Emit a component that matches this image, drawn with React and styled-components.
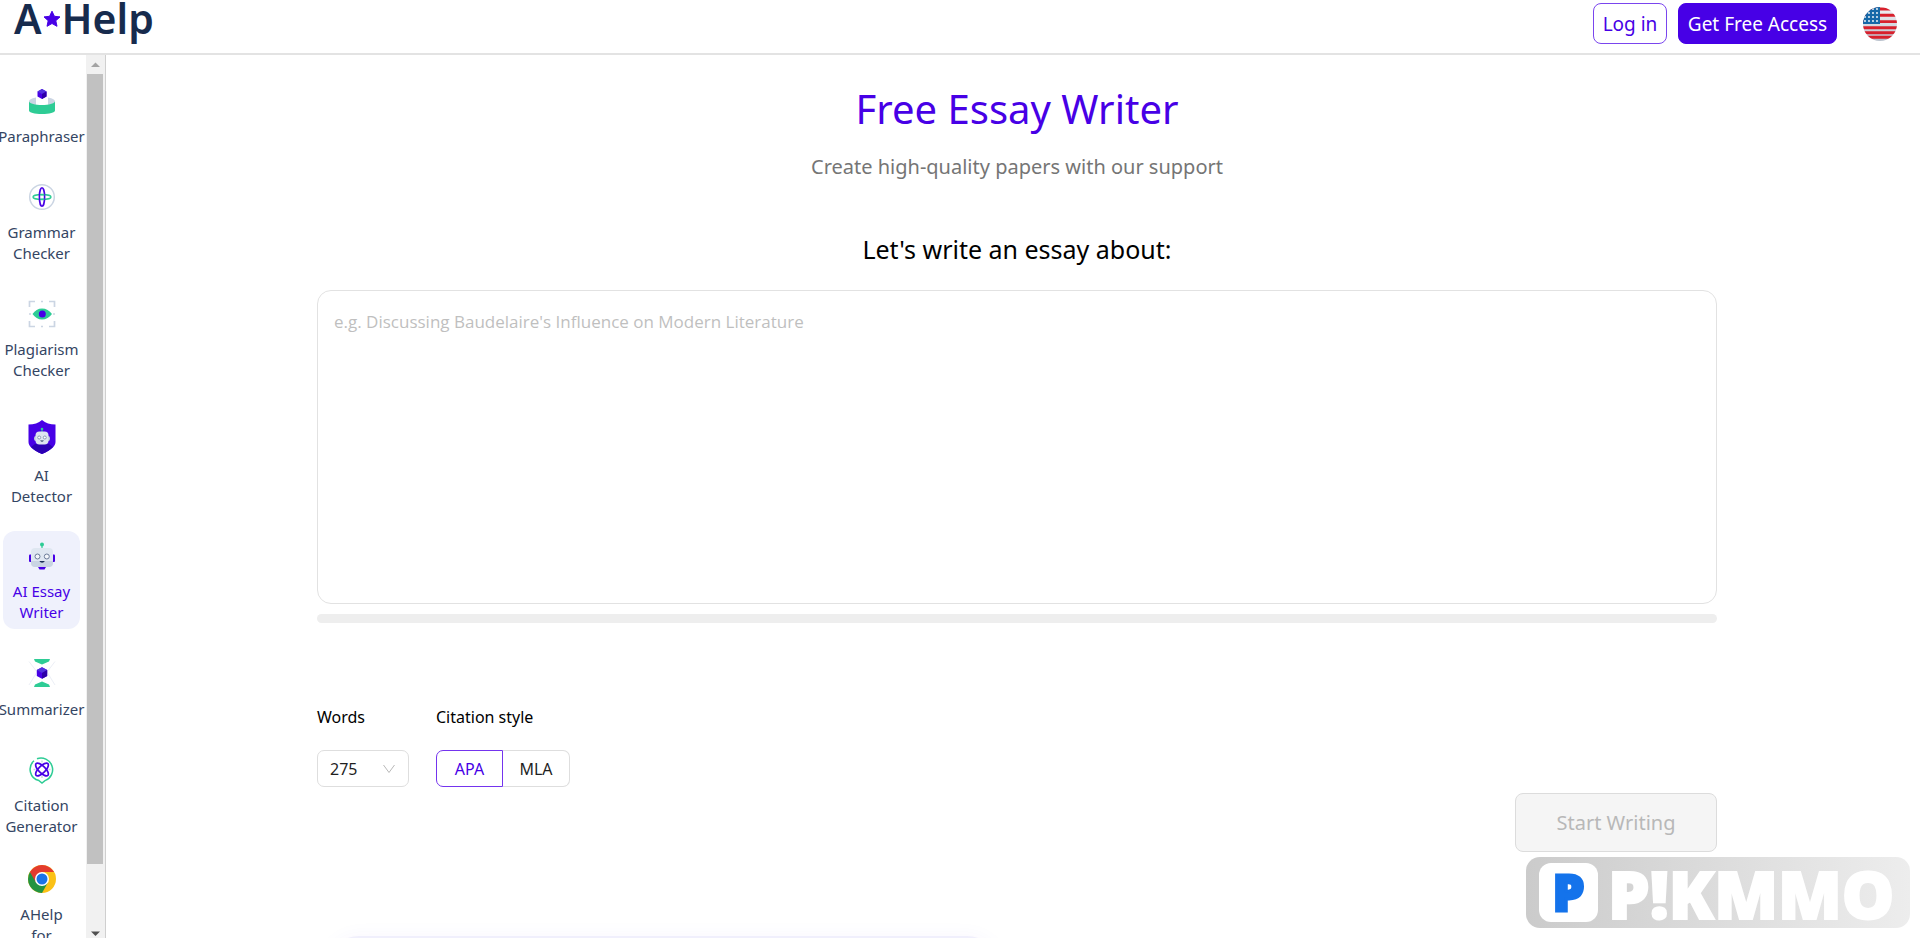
import React, { useState } from 'react';
import styled, { createGlobalStyle } from 'styled-components';


const GlobalStyle = createGlobalStyle`
    * {
        box-sizing: border-box;
    }

    body {
        margin: 0;
        background: #fff;
        color: #000;
        font-family: 'Noto Sans', sans-serif;
    }

    button, select, textarea, input {
        font-family: inherit;
    }
`;

const Cube = ({ x, y, s }) => (
    <g transform={`translate(${x} ${y}) scale(${s})`}>
        <path d="M0-5 4.5-2.6V2.6L0 5-4.5 2.6V-2.6Z" fill="#4700e6" />
        <path d="M0-5 4.5-2.6 0 0-4.5-2.6Z" fill="#5133dd" />
        <path d="M0 0 4.5-2.6V2.6L0 5Z" fill="#2d00a8" />
    </g>
);

const ParaphraserIcon = () => (
    <svg width="28" height="28" viewBox="0 0 28 28">
        <ellipse cx="14" cy="14.500" rx="13" ry="4.500" fill="#cbd5e3" />
        <path d="M8 9.500h12v9H8z" fill="#fff" />
        <path d="M1 14.500c1 2 6 3.500 13 3.500s12-1.500 13-3.500v9c0 2-5.500 3.500-13 3.500S1 25.500 1 23.500Z" fill="#2ecc95" />
        <Cube x={14} y={7} s={1} />
    </svg>
);

const GrammarIcon = () => (
    <svg width="28" height="28" viewBox="0 0 28 28" fill="none">
        <circle cx="14" cy="14" r="12.300" stroke="#cbd5e3" strokeWidth="1.500" />
        <ellipse cx="14" cy="14" rx="9" ry="2.500" stroke="#2ecc95" strokeWidth="1.400" />
        <ellipse cx="14" cy="14" rx="2.600" ry="9.200" stroke="#4700e6" strokeWidth="1.600" />
        <path d="M12.500 11.800h4M12.500 16.200h4" stroke="#2ecc95" strokeWidth="1.200" />
    </svg>
);

const PlagiarismIcon = () => (
    <svg width="28" height="28" viewBox="0 0 28 28" fill="none">
        <path d="M1.500 7V1.500H7M21 1.500h5.500V7M26.500 21v5.500H21M7 26.500H1.500V21" stroke="#cbd5e3" strokeWidth="1.700" />
        <path d="M13 1.500h2M13 26.500h2M1 14h2M25 14h2" stroke="#cbd5e3" strokeWidth="1.700" />
        <path d="M4.500 14C7 10.500 10 8.500 14 8.500S21.500 10.500 24 14C21.500 17.500 18 19.500 14 19.500S7 17.500 4.500 14Z" fill="#2ecc95" />
        <circle cx="14.300" cy="14" r="3.500" fill="#4700e6" />
    </svg>
);

const DetectorIcon = () => (
    <svg width="28" height="34" viewBox="0 0 28 34">
        <path d="M14 0c3.500 3 8 4.500 13.500 4.500V22c0 4-4 8-13.500 12C4.500 30 .5 26 .5 22V4.500C6 4.500 10.500 3 14 0Z" fill="#4700e6" />
        <path d="M7 24h14l4 3c-2.500 2.500-6 5-11 7C9 32 5.500 29.500 3 27Z" fill="#2b00b3" />
        <circle cx="14" cy="9" r="1.300" fill="#2ecc95" />
        <path d="M13.500 9h1v3h-1z" fill="#2ecc95" />
        <rect x="6" y="16" width="16" height="5" rx="2" fill="#b9c5da" />
        <rect x="7.500" y="11.500" width="13" height="13" rx="4" fill="#dde5f0" />
        <circle cx="11.200" cy="17.500" r="1.500" fill="#fff" stroke="#7486a5" strokeWidth=".8" />
        <circle cx="16.800" cy="17.500" r="1.500" fill="#fff" stroke="#7486a5" strokeWidth=".8" />
        <path d="M12.200 20.500h3.600c-.5 1.500-3.100 1.500-3.600 0Z" fill="#1b2f55" />
    </svg>
);

const RobotIcon = () => (
    <svg width="28" height="28" viewBox="0 0 28 28">
        <circle cx="14" cy="2.500" r="2" fill="#2ecc95" />
        <path d="M13.400 3h1.200v4h-1.200z" fill="#2ecc95" />
        <rect x="1" y="12.500" width="4" height="7.500" rx="1" fill="#4700e6" />
        <rect x="23" y="12.500" width="4" height="7.500" rx="1" fill="#4700e6" />
        <path d="M10 25h8l-1.500 2.500h-5Z" fill="#4700e6" />
        <rect x="3" y="6" width="22" height="19" rx="4" fill="#dfe7f1" />
        <path d="M3 19h22v2c0 2.500-1.500 4-4 4H7c-2.500 0-4-1.500-4-4Z" fill="#c9d4e3" />
        <circle cx="9.500" cy="14.500" r="2.500" fill="#f3f6fa" stroke="#6b7b98" />
        <circle cx="18.800" cy="14.500" r="2.500" fill="#f3f6fa" stroke="#6b7b98" />
        <path d="M11.500 19h5.200c-.6 2.300-4.600 2.300-5.200 0Z" fill="#1b2f55" />
    </svg>
);

const SummarizerIcon = () => (
    <svg width="28" height="30" viewBox="0 0 28 30">
        <path d="M1 3.500 9 14 1 27M27 3.500 19 14 27 27" fill="none" stroke="#eceff6" />
        <path d="M6 1h16l-1 2.500L14 6.500 7 3.500Z" fill="#2ecc95" />
        <path d="M6 29h16l-1-2.500L14 23.500 7 26.500Z" fill="#2ecc95" />
        <Cube x={14} y={15} s={1.15} />
    </svg>
);

const CitationIcon = () => (
    <svg width="28" height="28" viewBox="0 0 28 28" fill="none">
        <path d="M9 2.800A11.500 11.500 0 0 1 17 24.600L14 27l-3-2.400A11.500 11.500 0 0 1 6 4.800" stroke="#2ecc95" strokeWidth="1.500" />
        <path d="M14 4.500v2M14 20v2M5.500 13.500h2M20.500 13.500h2" stroke="#cbd5e3" strokeWidth="1.500" />
        <g stroke="#4700e6" strokeWidth="1.700">
            <ellipse cx="14" cy="13.500" rx="8.300" ry="3.400" transform="rotate(45 14 13.500)" />
            <ellipse cx="14" cy="13.500" rx="8.300" ry="3.400" transform="rotate(-45 14 13.500)" />
        </g>
    </svg>
);

const ChromeIcon = () => (
    <svg width="28" height="28" viewBox="0 0 28 28">
        <circle cx="14" cy="14" r="14" fill="#fbc116" />
        <path d="M14 14 19.900 17.500 14 28A14 14 0 0 1 1.900 7Z" fill="#229342" />
        <path d="M14 14 8 17.500 1.900 7A14 14 0 0 1 26.100 7H14Z" fill="#e33b2e" />
        <circle cx="14" cy="14" r="7" fill="#fff" />
        <circle cx="14" cy="14" r="5.500" fill="#1a73e8" />
    </svg>
);

const StarIcon = () => (
    <svg width="18" height="18" viewBox="0 0 18 18">
        <path d="m9 1.200 2.400 5.100 5.600.6-4.200 3.800 1.200 5.600L9 13.500l-5 2.800 1.200-5.600L1 6.900l5.600-.6Z" fill="#4700e6" stroke="#4700e6" strokeLinejoin="round" />
    </svg>
);

const FlagIcon = () => (
    <svg width="34" height="34" viewBox="0 0 34 34">
        <defs>
            <clipPath id="flag-round"><circle cx="17" cy="17" r="17" /></clipPath>
            <pattern id="flag-stars" width="4" height="4" patternUnits="userSpaceOnUse">
                <circle cx="2" cy="2" r=".9" fill="#fff" />
            </pattern>
            <linearGradient id="flag-shade" x2="0" y2="1">
                <stop offset="0" stopColor="#f4f4f6" />
                <stop offset="1" stopColor="#b9c1cc" />
            </linearGradient>
        </defs>
        <g clipPath="url(#flag-round)">
            <rect width="34" height="34" fill="url(#flag-shade)" />
            <path d="M0 2h34M0 8.300h34M0 14.600h34M0 20.700h34M0 25.700h34M0 30.200h34" stroke="#d8202c" strokeWidth="2.900" />
            <path d="M0 0h17v17H0z" fill="#1668a8" />
            <path d="M0 0h17v17H0z" fill="url(#flag-stars)" />
        </g>
    </svg>
);

const tools = [
    { lines: ['Paraphraser'], icon: <ParaphraserIcon />, space: 11 },
    { lines: ['Grammar', 'Checker'], icon: <GrammarIcon />, space: 12 },
    { lines: ['Plagiarism', 'Checker'], icon: <PlagiarismIcon />, space: 12 },
    { lines: ['AI', 'Detector'], icon: <DetectorIcon />, space: 15 },
    { lines: ['AI Essay', 'Writer'], icon: <RobotIcon />, space: 11, active: true },
    { lines: ['Summarizer'], icon: <SummarizerIcon />, space: 11 },
    { lines: ['Citation', 'Generator'], icon: <CitationIcon />, space: 12 },
    { lines: ['AHelp', 'for', 'Chrome'], icon: <ChromeIcon />, space: 4 },
];

const App = () => {

    const [topic, setTopic] = useState('');
    const [words, setWords] = useState('275');
    const [citation, setCitation] = useState('APA');

    return (
        <Page>
            <GlobalStyle />
            <Header>
                <Logo href="#" aria-label="A Help">
                    A<StarIcon />Help
                </Logo>
                <HeaderActions>
                    <LoginButton type="button">Log in</LoginButton>
                    <AccessButton type="button">Get Free Access</AccessButton>
                    <FlagButton type="button" aria-label="Language">
                        <FlagIcon />
                    </FlagButton>
                </HeaderActions>
            </Header>
            <Body>
                <Sidebar>
                    <ToolList>
                        {tools.map(({ lines, icon, space, active }) => (
                            <ToolLink key={lines.join(' ')} href="#" $space={space} $active={active}>
                                {icon}
                                <ToolName>
                                    {lines.map((line) => <span key={line}>{line}</span>)}
                                </ToolName>
                            </ToolLink>
                        ))}
                    </ToolList>
                    <ScrollTrack aria-hidden="true">
                        <svg width="18" height="19" viewBox="0 0 18 19"><path d="M5 12 9.500 7.500 14 12Z" fill="#a3a3a3" /></svg>
                        <ScrollThumb />
                        <svg width="18" height="19" viewBox="0 0 18 19"><path d="M5 12.500h9L9.500 17Z" fill="#505050" /></svg>
                    </ScrollTrack>
                </Sidebar>
                <Main>
                    <Content>
                        <Title>Free Essay Writer</Title>
                        <Subtitle>Create high-quality papers with our support</Subtitle>
                        <TopicLabel htmlFor="topic">Let's write an essay about:</TopicLabel>
                        <TopicInput
                            id="topic"
                            value={topic}
                            onChange={(e) => setTopic(e.target.value)}
                            placeholder="e.g. Discussing Baudelaire's Influence on Modern Literature"
                        />
                        <Progress />
                        <Options>
                            <Field>
                                <FieldLabel htmlFor="words">Words</FieldLabel>
                                <SelectBox>
                                    <Select id="words" value={words} onChange={(e) => setWords(e.target.value)}>
                                        <option>275</option>
                                        <option>550</option>
                                        <option>825</option>
                                    </Select>
                                    <svg width="12" height="10" viewBox="0 0 12 10" fill="none">
                                        <path d="M.5 1 6 8.500 11.500 1" stroke="#b8b8b8" />
                                    </svg>
                                </SelectBox>
                            </Field>
                            <Field role="radiogroup" aria-labelledby="citation">
                                <FieldLabel as="span" id="citation">Citation style</FieldLabel>
                                <Segments>
                                    {['APA', 'MLA'].map((style) => (
                                        <Segment key={style} $checked={citation === style}>
                                            <input
                                                type="radio"
                                                name="citation"
                                                checked={citation === style}
                                                onChange={() => setCitation(style)}
                                            />
                                            {style}
                                        </Segment>
                                    ))}
                                </Segments>
                            </Field>
                        </Options>
                        <StartButton type="button" disabled>Start Writing</StartButton>
                        <NextCard />
                    </Content>
                </Main>
            </Body>
            <Watermark>
                <WatermarkBadge>P</WatermarkBadge>
                <WatermarkName>P!KMMO</WatermarkName>
            </Watermark>
        </Page>
    );
};

const Page = styled.div`
    display: flex;
    flex-direction: column;
    height: 100vh;
    overflow: hidden;
`;

const Header = styled.header`
    display: flex;
    flex-shrink: 0;
    justify-content: space-between;
    height: 55px;
    padding: 0 23px 0 14px;
    border-bottom: 2px solid #e3e3e3;
`;

const Logo = styled.a`
    display: flex;
    align-items: center;
    height: 37px;
    color: #172b4d;
    font-size: 41px;
    font-weight: 600;
    line-height: 37px;
    text-decoration: none;

    svg {
        margin: 0 1px;
    }
`;

const HeaderActions = styled.div`
    display: flex;
    align-items: flex-start;
    gap: 11px;
    padding-top: 3px;
`;

const LoginButton = styled.button`
    width: 74px;
    height: 41px;
    padding: 0;
    border: 1px solid #7a45ee;
    border-radius: 8px;
    background: #fff;
    color: #4700e6;
    font-size: 19px;
    cursor: pointer;
`;

const AccessButton = styled(LoginButton)`
    width: 159px;
    border-color: #4700e6;
    background: #4700e6;
    color: #fff;
`;

const FlagButton = styled.button`
    display: flex;
    margin: 4px 0 0 15px;
    padding: 0;
    border: 0;
    background: none;
    cursor: pointer;
`;

const Body = styled.div`
    display: flex;
    flex: 1;
    min-height: 0;
`;

const Sidebar = styled.aside`
    display: flex;
    flex-shrink: 0;
    border-right: 1px solid #cfcfcf;
`;

const ToolList = styled.nav`
    width: 86px;
    padding: 21px 6px 0 3px;
    overflow: hidden;
`;

const ToolLink = styled.a`
    display: flex;
    flex-direction: column;
    align-items: center;
    gap: 11px;
    margin-bottom: 18px;
    padding: ${({ $space }) => $space}px 0 6px;
    border-radius: 12px;
    background: ${({ $active }) => ($active ? '#eff1fc' : 'none')};
    color: ${({ $active }) => ($active ? '#4700e6' : '#344563')};
    font-size: 15px;
    line-height: 21px;
    text-decoration: none;
`;

const ToolName = styled.span`
    display: flex;
    flex-direction: column;
    align-items: center;
    white-space: nowrap;
`;

const ScrollTrack = styled.div`
    display: flex;
    flex-direction: column;
    width: 19px;
    background: #f1f1f1;
`;

const ScrollThumb = styled.div`
    flex: 1;
    max-height: calc(100% - 93px);
    margin: 0 2px auto 1px;
    background: #c1c1c1;
`;

const Main = styled.main`
    flex: 1;
    min-width: 0;
    padding: 29px 0 0 8px;
    overflow: hidden;
`;

const Content = styled.div`
    display: flex;
    flex-direction: column;
    max-width: 1400px;
    margin: 0 auto;
`;

const Title = styled.h1`
    margin: 0;
    color: #4700e6;
    font-size: 40px;
    font-weight: 400;
    line-height: 50px;
    text-align: center;
`;

const Subtitle = styled.p`
    margin: 18px 0 0;
    color: #757575;
    font-size: 20px;
    line-height: 30px;
    text-align: center;
`;

const TopicLabel = styled.label`
    margin: 47px 0 21px;
    font-size: 25px;
    line-height: 40px;
    text-align: center;
`;

const TopicInput = styled.textarea`
    width: 100%;
    height: 314px;
    padding: 17px 16px;
    border: 1px solid #e2e2e2;
    border-radius: 14px;
    outline: none;
    resize: none;
    font-size: 17px;
    line-height: 27px;

    && {
        font-family: 'Open Sans', sans-serif;
    }

    &::placeholder {
        color: #bfbfbf;
    }
`;

const Progress = styled.div`
    height: 9px;
    margin-top: 10px;
    border-radius: 5px;
    background: #eee;
`;

const Options = styled.div`
    display: flex;
    gap: 27px;
    margin-top: 82px;
`;

const Field = styled.div`
    display: flex;
    flex-direction: column;
    gap: 21px;
`;

const FieldLabel = styled.label`
    font-size: 16px;
    line-height: 24px;
`;

const SelectBox = styled.div`
    display: grid;
    align-items: center;

    & > * {
        grid-area: 1 / 1;
    }

    svg {
        justify-self: end;
        margin-right: 14px;
        pointer-events: none;
    }
`;

const Select = styled.select`
    width: 92px;
    height: 37px;
    padding: 0 12px;
    appearance: none;
    border: 1px solid #dedede;
    border-radius: 7px;
    background: #fff;
    color: #1f1f1f;
    font-size: 16px;
`;

const Segments = styled.div`
    display: flex;
`;

const Segment = styled.label`
    display: flex;
    align-items: center;
    justify-content: center;
    width: 67px;
    height: 37px;
    border: 1px solid ${({ $checked }) => ($checked ? '#7434ee' : '#dedede')};
    color: ${({ $checked }) => ($checked ? '#4700e6' : '#1f1f1f')};
    font-size: 16px;
    cursor: pointer;

    &:first-child {
        border-radius: 7px 0 0 7px;
    }

    &:last-child {
        border-left: 0;
        border-radius: 0 7px 7px 0;
    }

    input {
        position: absolute;
        opacity: 0;
        pointer-events: none;
    }
`;

const StartButton = styled.button`
    align-self: flex-end;
    width: 202px;
    height: 59px;
    margin-top: 6px;
    border: 1px solid #dcdcdc;
    border-radius: 8px;
    background: #f5f5f5;
    color: #b8b8b8;
    font-size: 20px;
`;

const NextCard = styled.section`
    width: 48%;
    height: 300px;
    margin: 84px 0 0 10px;
    border-radius: 32px;
    background: #f0effc;
    box-shadow: 0 0 20px rgba(71, 0, 230, 0.04);
`;

const Watermark = styled.div`
    position: fixed;
    right: 10px;
    bottom: 10px;
    display: flex;
    align-items: center;
    gap: 10px;
    width: 384px;
    height: 71px;
    padding-left: 13px;
    border-radius: 14px;
    background: linear-gradient(90deg, #cbcbcb, #ededed);
    font-family: 'Open Sans', sans-serif;
    font-weight: 800;
`;

const WatermarkBadge = styled.div`
    display: flex;
    flex-shrink: 0;
    align-items: center;
    justify-content: center;
    width: 59px;
    height: 59px;
    border-radius: 12px;
    background: #fff;
    color: #1473eb;
    font-size: 50px;
    line-height: 59px;
    -webkit-text-stroke: 3px #1473eb;
`;

const WatermarkName = styled.div`
    color: #fff;
    font-size: 66px;
    line-height: 68px;
    -webkit-text-stroke: 2px #fff;
`;


export default App;
